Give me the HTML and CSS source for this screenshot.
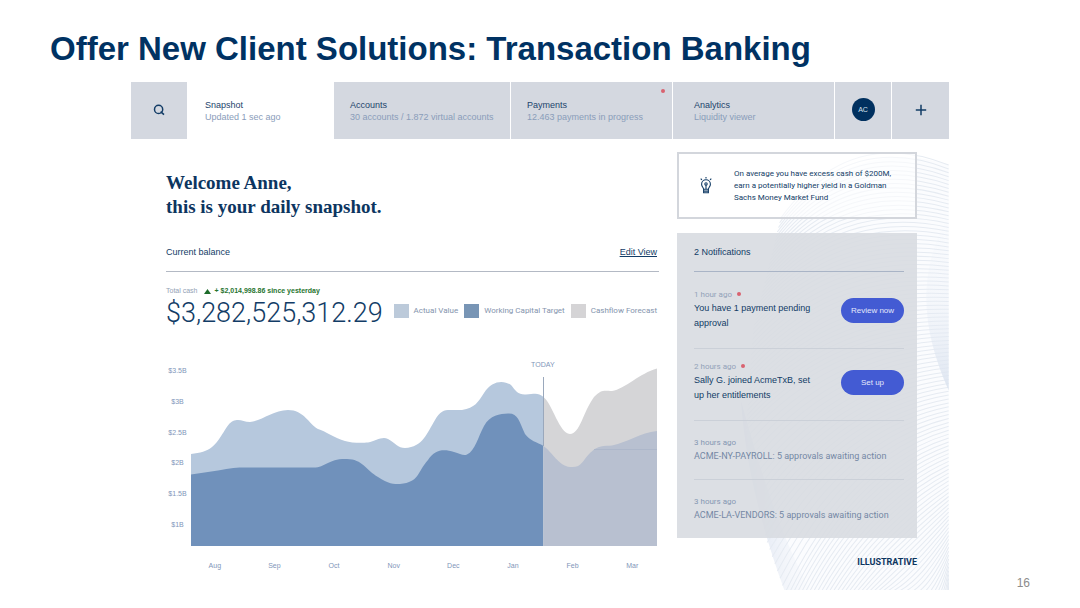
FILE: index.html
```html
<!DOCTYPE html>
<html lang="en">
<head>
<meta charset="utf-8">
<meta name="viewport" content="width=device-width, initial-scale=1">
<title>Offer New Client Solutions: Transaction Banking</title>
<link rel="stylesheet" href="styles.css">
</head>
<body>
<div class="slide">
  <h1 class="slide-title">Offer New Client Solutions: Transaction Banking</h1>

  <div class="dashboard">
    <svg class="backdrop" viewBox="735 152 214 441" preserveAspectRatio="none" aria-hidden="true">
      <defs>
        <linearGradient id="fold-right" x1="0" y1="0" x2="0" y2="1">
          <stop offset="0" stop-color="#e6ecf5" stop-opacity="0"/>
          <stop offset="0.5" stop-color="#e6ecf5" stop-opacity="0.3"/>
          <stop offset="1" stop-color="#dbe3ef" stop-opacity="0.9"/>
        </linearGradient>
        <linearGradient id="fold-left" x1="0" y1="0" x2="1" y2="0">
          <stop offset="0" stop-color="#d6deee"/>
          <stop offset="1" stop-color="#eef2f8" stop-opacity="0"/>
        </linearGradient>
      </defs>
      <path class="backdrop-wash" d="M780 218Q860 135 949 165V593H785C770 545 755 520 745 430Z"/>
      <path fill="url(#fold-left)" d="M740 400C745 470 762 530 785 593H812C785 545 765 490 740 400Z"/>
      <g id="backdrop-lines" class="backdrop-lines"></g>
      <path fill="url(#fold-right)" d="M949 215C918 270 920 325 949 390Z"/>
    </svg>

    <nav class="tabs" aria-label="Main">
      <button class="tab tab-icon" type="button" aria-label="Search">
        <svg width="12" height="12" viewBox="0 0 12 12" fill="none" stroke="currentColor" stroke-width="1.5"><circle cx="5.6" cy="5.4" r="4.1"/><path d="M7.600 7.600l3.400 3"/></svg>
      </button>
      <a class="tab tab-active" href="#snapshot"><span class="tab-name">Snapshot</span><span class="tab-note">Updated 1 sec ago</span></a>
      <a class="tab" href="#accounts"><span class="tab-name">Accounts</span><span class="tab-note">30 accounts / 1.872 virtual accounts</span></a>
      <a class="tab" href="#payments"><span class="tab-name">Payments</span><span class="tab-note">12.463 payments in progress</span><span class="dot tab-dot"></span></a>
      <a class="tab tab-wide-pad" href="#analytics"><span class="tab-name">Analytics</span><span class="tab-note">Liquidity viewer</span></a>
      <button class="tab tab-icon" type="button"><span class="avatar">AC</span></button>
      <button class="tab tab-icon" type="button" aria-label="Add">
        <svg width="12" height="12" viewBox="0 0 12 12" fill="none" stroke="currentColor" stroke-width="1.5"><path d="M6 .8v10.4M.8 6h10.4"/></svg>
      </button>
    </nav>

    <div class="columns">
      <main class="main" id="snapshot">
        <h2 class="welcome">Welcome Anne,<br>this is your daily snapshot.</h2>
        <div class="section-head">
          <h3 class="section-title">Current balance</h3>
          <a class="edit-link" href="#edit">Edit View</a>
        </div>
        <p class="cash-line"><span>Total cash</span>
          <svg width="7" height="5" viewBox="0 0 7 5" aria-hidden="true"><path fill="#1d6b2a" d="M3.5 0L7 5H0z"/></svg>
          <strong class="cash-gain">+ $2,014,998.86 since yesterday</strong></p>
        <div class="total-row">
          <div class="total">$3,282,525,312.29</div>
          <ul class="legend">
            <li><span class="swatch swatch-actual"></span>Actual Value</li>
            <li><span class="swatch swatch-target"></span>Working Capital Target</li>
            <li><span class="swatch swatch-forecast"></span>Cashflow Forecast</li>
          </ul>
        </div>

        <div class="chart">
          <div class="y-axis"><span>$3.5B</span><span>$3B</span><span>$2.5B</span><span>$2B</span><span>$1.5B</span><span>$1B</span></div>
          <div class="plot">
            <span class="today">TODAY</span>
            <svg class="areas" viewBox="191 367 466 179" preserveAspectRatio="none" role="img" aria-label="Balance by month, August to March">
              <path fill="#b6c8dd" d="M191 454C200 453 207 451 212 447C222 439 226 424 233 421C240 418 243 422 250 422C262 421 273 410 288 410C304 410 309 424 318 429C325 431 335 438 345 441C351 443 362 443 368 442.500C376 441 382 436 388 439C395 443 398 448 405 448C423 447 427 433 435 420C440 411 444 410 450 410H462C475 408 478 402 484 393C492 380 504 380 511 385C516 391 518 395 526 394.500C534 394 538 392 543.500 397V546H191Z"/>
              <path fill="#7091bb" d="M191 474.500L218 470.500C230 468 238 467.500 245 467.500H313C325 468 328 459 345 459C362 458 366 470 378 477C388 484 394 484 400 484C420 482 417 472 428 460C435 449 444 449 454 452C460 454 464 456 467 454.500C475 451 478 437 484 426C490 415 500 414 508 413.500C518 413 519 421 525 434C530 441 537 442 543.500 446V546H191Z"/>
              <path fill="#d5d5d7" d="M543.500 397C553 405 559 433 570 434C580 434 583 412 594 397C602 389 604 391 612 391C625 389 640 373 657 368.500V546H543.500Z"/>
              <path fill="#b8c0d0" d="M543.500 446C552 452 559 466 570 467C582 468 582 461 590 453C598 445 604 446 612 445.500C628 442 640 433 657 431V546H543.500Z"/>
              <path stroke="#adb7ca" stroke-width="1" d="M594 449.500H657"/>
              <path stroke="#9aa8bc" stroke-width="1" d="M543.500 377V446"/>
            </svg>
          </div>
          <div class="x-axis"><span>Aug</span><span>Sep</span><span>Oct</span><span>Nov</span><span>Dec</span><span>Jan</span><span>Feb</span><span>Mar</span></div>
        </div>
      </main>

      <aside class="side">
        <section class="tip">
          <svg class="bulb" width="16" height="19" viewBox="0 0 16 19" fill="none" stroke="currentColor" stroke-width="1.100"><path d="M5.600 13.200C5.600 11.600 3.600 10.700 3.600 8.200a4.400 4.400 0 0 1 8.800 0c0 2.500-2 3.400-2 5zM5.600 13.200v3.600h4.800v-3.600M5.600 15.100h4.800M8 13V8.500M8 1V2.500M2.700 2.600l1.200 1.300M13.300 2.600l-1.200 1.300"/><circle cx="8" cy="8" r="1.200"/></svg>
          <p class="tip-text">On average you have excess cash of $200M, earn a potentially higher yield in a Goldman Sachs Money Market Fund</p>
        </section>

        <section class="notes">
          <h3 class="notes-title">2 Notifications</h3>
          <ul class="note-list">
            <li class="note note-new">
              <div class="note-body"><p class="note-time">1 hour ago <span class="dot"></span></p><p class="note-text">You have 1 payment pending approval</p></div>
              <button class="pill" type="button">Review now</button>
            </li>
            <li class="note note-new">
              <div class="note-body"><p class="note-time">2 hours ago <span class="dot"></span></p><p class="note-text">Sally G. joined AcmeTxB, set up her entitlements</p></div>
              <button class="pill" type="button">Set up</button>
            </li>
            <li class="note note-read">
              <div class="note-body"><p class="note-time">3 hours ago</p><p class="note-text">ACME-NY-PAYROLL: 5 approvals awaiting action</p></div>
            </li>
            <li class="note note-read">
              <div class="note-body"><p class="note-time">3 hours ago</p><p class="note-text">ACME-LA-VENDORS: 5 approvals awaiting action</p></div>
            </li>
          </ul>
        </section>
        <p class="stamp">ILLUSTRATIVE</p>
      </aside>
    </div>
  </div>
  <footer class="page-number">16</footer>
</div>
<script src="backdrop.js"></script>
</body>
</html>
```

FILE: styles.css
```css
:root {
  --navy: #123c66;
  --muted: #8a9dba;
  --tab: #d4d8e0;
}

* { box-sizing: border-box; }

body {
  margin: 0;
  background: #fff;
  color: var(--navy);
  font: 9px/12px "Liberation Sans", Arial, sans-serif;
}

h1, h2, h3, p, ul { margin: 0; padding: 0; font-size: inherit; font-weight: normal; }
ul { list-style: none; }
a { color: inherit; text-decoration: none; }
button { border: 0; padding: 0; font: inherit; color: inherit; cursor: pointer; }

.slide { padding: 28px 50px 0; }

.slide-title {
  color: #003263;
  font-size: 33px;
  line-height: 42px;
  font-weight: bold;
  white-space: nowrap;
}

.dashboard {
  position: relative;
  margin: 12px 81px 0;
  padding-bottom: 24px;
}

.backdrop {
  position: absolute;
  z-index: -1;
  right: 0;
  top: 70px;
  width: 26%;
  height: calc(100% - 70px);
}
.backdrop-wash { fill: #fbfcfe; }
.backdrop-lines { fill: none; stroke: #e6ebf2; stroke-width: 1; }

/* Tabs */
.tabs {
  display: grid;
  grid-template-columns: 56fr 145fr 176fr 161fr 161fr 56fr 57fr;
  column-gap: 1px;
}
.tab {
  position: relative;
  display: flex;
  flex-direction: column;
  justify-content: center;
  min-height: 57px;
  padding: 0 0 0 16px;
  background: var(--tab);
}
.tab-wide-pad { padding-left: 21px; }
.tab-active { background: none; padding-left: 17px; }
.tab-icon { align-items: center; padding: 0 0 2px; }
.tab-name { color: #1c446c; }
.tab-note { color: var(--muted); white-space: nowrap; }
.dot {
  display: inline-block;
  width: 4px;
  height: 4px;
  border-radius: 50%;
  background: #d96370;
}
.tab-dot { position: absolute; top: 7px; right: 7px; }
.avatar {
  display: grid;
  place-items: center;
  width: 23px;
  height: 23px;
  border-radius: 50%;
  background: #00305f;
  color: #d6e2ef;
  font-size: 7px;
}

/* Columns */
.columns {
  display: grid;
  grid-template-columns: 493fr 240fr;
  column-gap: 18px;
  padding: 13px 32px 0 35px;
}

.welcome {
  margin-top: 19px;
  color: #0c3560;
  font: bold 19px/24px "Liberation Serif", "Times New Roman", serif;
}
.section-head {
  display: flex;
  justify-content: space-between;
  margin-top: 27px;
  padding: 0 2px 13px 0;
  border-bottom: 1px solid #b3b9c4;
}
.edit-link { text-decoration: underline; text-underline-offset: 1px; }

.cash-line {
  display: flex;
  align-items: center;
  gap: 6px;
  margin-top: 14px;
  color: #93a1b5;
  font-size: 7px;
  line-height: 10px;
}
.cash-gain { color: #27742f; margin-left: -2px; }

.total-row {
  display: flex;
  align-items: center;
  justify-content: space-between;
  padding-right: 2px;
}
.total { font: 300 27px/34px Roboto, "Liberation Sans", sans-serif; }
.legend {
  display: flex;
  gap: 6px;
  padding-bottom: 4px;
  color: #8494ad;
  font: 8px/14px Roboto, sans-serif;
  white-space: nowrap;
}
.legend li { display: flex; align-items: center; gap: 5px; }
.swatch { width: 15px; height: 14px; }
.swatch-actual { background: #bccada; }
.swatch-target { background: #7895b5; }
.swatch-forecast { background: #d5d4d6; }

/* Chart */
.chart {
  display: grid;
  grid-template-columns: 19px 1fr;
  column-gap: 4px;
  padding: 37px 2px 0;
  color: #7f96b9;
  font-size: 7px;
  line-height: 8px;
}
.y-axis {
  display: flex;
  flex-direction: column;
  justify-content: space-between;
  text-align: center;
  padding-bottom: 17px;
}
.plot { position: relative; }
.areas { display: block; width: 100%; height: 179px; }
.today {
  position: absolute;
  left: 75.5%;
  top: -6px;
  transform: translateX(-50%);
}
.x-axis {
  grid-column: 2;
  display: grid;
  grid-template-columns: repeat(8, 1fr);
  margin: 16px -5px 0 -6px;
  text-align: center;
}

/* Side column */
.tip {
  display: flex;
  align-items: center;
  gap: 20px;
  min-height: 67px;
  padding: 0 18px 0 19px;
  border: 2px solid #d3d6dc;
  background: rgba(255, 255, 255, .6);
}
.bulb { flex: none; }
.tip-text { font: 8px/12px Roboto, sans-serif; }

.notes {
  margin-top: 14px;
  padding: 13px 13px 0 17px;
  background: rgba(216, 220, 225, .9);
}
.notes-title { padding-bottom: 13px; border-bottom: 1px solid #a9b4c6; }
.note-list { padding-top: 5px; }
.note {
  display: flex;
  align-items: center;
  justify-content: space-between;
  padding: 17px 0 15px;
  border-bottom: 1px solid #cbd0d8;
}
.note-new { padding: 13px 0 17px; }
.note:last-child { border-bottom: 0; }
.note-body { flex: 1; }
.note-new .note-body { max-width: 124px; }
.note-time {
  color: #93a2b9;
  font: 8px/10px Roboto, sans-serif;
}
.note-time .dot { margin: 0 0 1px 3px; }
.note-text { padding-top: 1px; line-height: 15px; }
.note-read .note-text { font-family: Roboto, sans-serif; color: #7488a4; white-space: nowrap; }
.note-read .note-time { color: #8698b3; }
.pill {
  width: 63px;
  height: 25px;
  border-radius: 13px;
  background: #435bd3;
  color: #e4e9fb;
  font-size: 8px;
}
.stamp {
  margin-top: 18px;
  text-align: right;
  color: #0c3560;
  font: bold 9px/12px Roboto, sans-serif;
}

.page-number {
  margin-top: -18px;
  text-align: right;
  color: #8c8c8c;
  font-size: 12px;
  line-height: 14px;
}
```

FILE: backdrop.js
```js
// Fills the backdrop with a fan of fine curves that turn from flat arcs to steep diagonals.
const group = document.getElementById("backdrop-lines");
const edge = [[780, 218], [752, 330], [745, 430], [765, 538], [785, 593], [949, 593]];
const stops = [0, 0.22, 0.4, 0.55, 0.62, 1];

function edgePoint(t) {
  let i = 1;
  while (i < stops.length - 1 && t > stops[i]) i++;
  const k = (t - stops[i - 1]) / (stops[i] - stops[i - 1]);
  return [0, 1].map(a => edge[i - 1][a] + k * (edge[i][a] - edge[i - 1][a]));
}

const count = 110;
for (let n = 0; n < count; n++) {
  const t = n / count;
  const [sx, sy] = edgePoint(t);
  const ey = 165 + t * 428;
  const cx = sx + (949 - sx) * 0.4;
  const cy = ey - 40 + t * 110;
  const path = document.createElementNS("http://www.w3.org/2000/svg", "path");
  path.setAttribute("d", `M${sx} ${sy}Q${cx} ${cy} 949 ${ey}`);
  group.appendChild(path);
}
```
